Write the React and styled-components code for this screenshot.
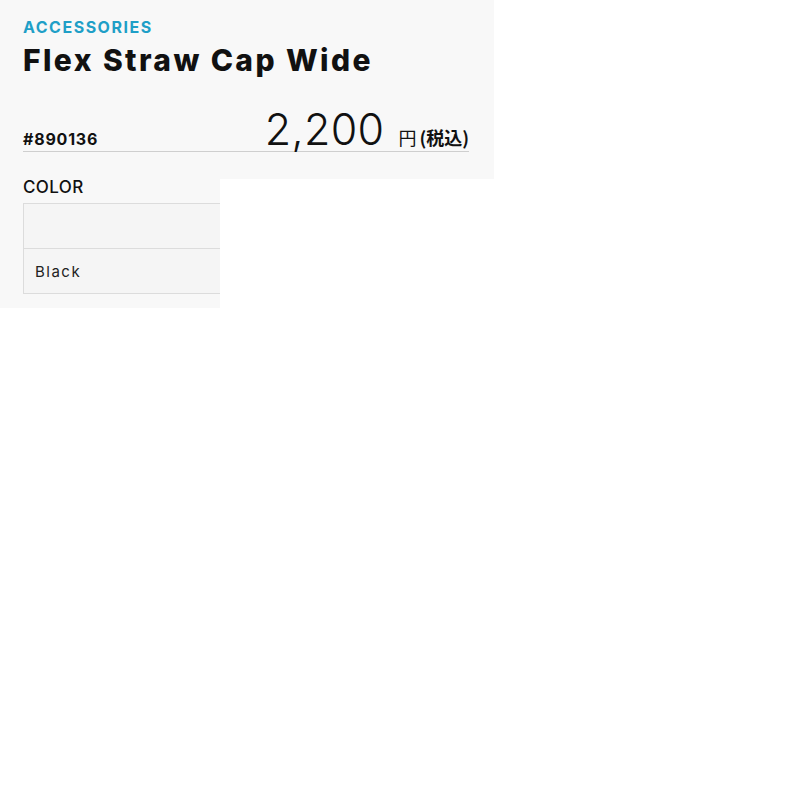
import styled, { createGlobalStyle } from 'styled-components';

const GlobalStyle = createGlobalStyle`
  body {
    margin: 0;
    background: #fff;
    font-family: Inter, 'Noto Sans CJK JP', sans-serif;
    color: #111;
  }
`;

const ProductPanel = styled.section`
  position: relative;
  box-sizing: border-box;
  width: 494px;
  height: 308px;
  padding: 16px 25px 0 23px;
  background: #f8f8f8;
`;

const Category = styled.div`
  font-size: 16px;
  font-weight: 700;
  line-height: 22px;
  letter-spacing: 1.5px;
  color: #1f9fc7;
`;

const Title = styled.h1`
  margin: 5px 0 0;
  font-size: 30px;
  font-weight: 800;
  line-height: 34px;
  letter-spacing: 2.4px;
  color: #111;
`;

const PriceRow = styled.div`
  display: flex;
  justify-content: space-between;
  align-items: baseline;
  margin-top: 32px;
  padding-bottom: 2px;
  border-bottom: 1px solid #cfcfcf;
`;

const ItemCode = styled.span`
  font-size: 16px;
  font-weight: 700;
  letter-spacing: 0.8px;
  line-height: 20px;
`;

const Price = styled.div`
  display: flex;
  align-items: baseline;
  gap: 14px;
`;

const Amount = styled.span`
  font-size: 43px;
  font-weight: 300;
  line-height: 40px;
  letter-spacing: 0.3px;
`;

const Unit = styled.span`
  font-family: 'Noto Sans CJK JP', sans-serif;
  font-size: 18px;
  line-height: 20px;
  b {
    margin-left: 3px;
    font-weight: 700;
  }
`;

const Label = styled.div`
  margin-top: 24px;
  font-size: 17px;
  font-weight: 500;
  line-height: 22px;
  letter-spacing: 0.4px;
`;

const OptionTable = styled.div`
  margin-top: 5px;
  border: 1px solid #dcdcdc;
  background: #f5f5f5;
`;

const OptionRow = styled.div`
  box-sizing: border-box;
  height: ${(p) => p.$h}px;
  padding: 0 11px;
  display: flex;
  align-items: center;
  font-size: 15px;
  letter-spacing: 1.5px;
  color: #222;
  & + & {
    border-top: 1px solid #dcdcdc;
  }
`;

const Cover = styled.div`
  position: absolute;
  left: 220px;
  top: 179px;
  right: 0;
  bottom: 0;
  background: #fff;
`;

export default function App() {
  return (
    <>
      <GlobalStyle />
      <ProductPanel>
        <Category>ACCESSORIES</Category>
        <Title>Flex Straw Cap Wide</Title>
        <PriceRow>
          <ItemCode>#890136</ItemCode>
          <Price>
            <Amount>2,200</Amount>
            <Unit>
              円<b>(税込)</b>
            </Unit>
          </Price>
        </PriceRow>
        <Label>COLOR</Label>
        <OptionTable>
          <OptionRow $h={44} />
          <OptionRow $h={45}>Black</OptionRow>
        </OptionTable>
        <Cover />
      </ProductPanel>
    </>
  );
}
